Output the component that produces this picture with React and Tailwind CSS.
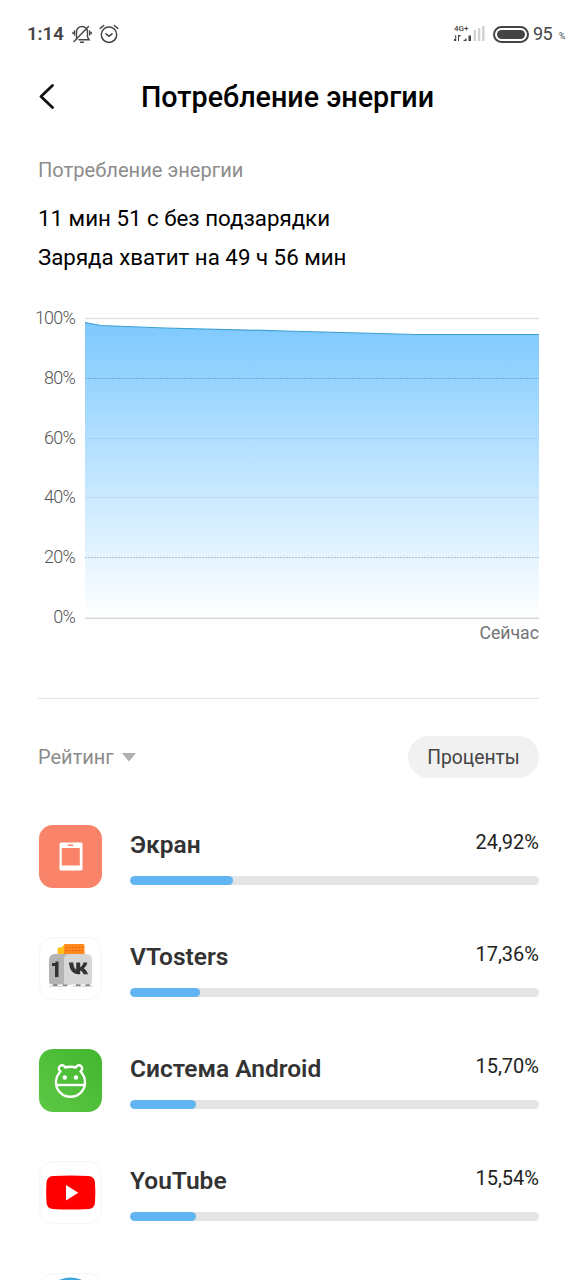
const levels = ["100%", "80%", "60%", "40%", "20%", "0%"];

const apps = [
  { name: "Экран", percent: "24,92%", fill: 25.2, icon: <ScreenIcon /> },
  { name: "VTosters", percent: "17,36%", fill: 17.2, icon: <TosterIcon /> },
  { name: "Система Android", percent: "15,70%", fill: 16.2, icon: <AndroidIcon /> },
  { name: "YouTube", percent: "15,54%", fill: 16.2, icon: <YoutubeIcon /> },
];

function ScreenIcon() {
  return (
    <svg viewBox="0 0 63 63" className="w-full h-full">
      <rect width="63" height="63" rx="14" fill="#fa8469" />
      <rect x="20.5" y="17.5" width="23" height="28" rx="1.5" fill="#fff" />
      <rect x="22.8" y="23" width="18" height="17.5" fill="#fa8469" />
      <rect x="28.5" y="19.5" width="6" height="1.6" rx="0.8" fill="#fa8469" />
    </svg>
  );
}

function TosterIcon() {
  return (
    <svg viewBox="0 0 63 63" className="w-full h-full">
      <rect x="0.5" y="0.5" width="62" height="62" rx="14" fill="#fff" stroke="#f5f5f5" />
      <path d="M25 18V8q0-1 1.500-1H44q1.500 0 1.500 1.500V18z" fill="#ff8a1c" />
      <path d="M18.500 17v-5q0-1.500 1.500-1.500h2L25 8v9z" fill="#ffc01c" />
      <path d="M27 10.500h17M27 13.500h17" stroke="#f4601e" strokeWidth="1.2" strokeDasharray="2 1" />
      <path d="M14 47h4.500v2H14zM24 47h4.500v2H24zM37 47h4.500v2H37zM46.500 47H51v2h-4.500z" fill="#777" />
      <path d="M10 49.300h18M34 49.300h20" stroke="#ccc" strokeWidth="1" />
      <path d="M16 17h16v30.500H13q-3 0-3-3V23q0-6 6-6z" fill="#b4b4b4" />
      <path d="M31 17h16q6 0 6 6v21.500q0 3-3 3H25V23q0-6 6-6z" fill="#d6d6d6" />
      <path d="M13 26h3.500v-1.500h3V40H16V29h-3z" fill="#333" />
      <path d="M30 25.500h4.300c.3 4.500 1.500 6.500 2.900 7v-7h4v4.700c1.300-.5 2.700-2.400 3.200-4.700h4c-.5 2.500-2 4.600-3.700 5.800 1.800 1 3.400 3.200 4.300 6h-4.400c-.6-1.800-1.800-3.400-3.400-3.900v3.900h-1.600c-5.600 0-9-4-9.600-11.800z" fill="#333" />
    </svg>
  );
}

function AndroidIcon() {
  return (
    <svg viewBox="0 0 63 63" className="w-full h-full">
      <defs>
        <linearGradient id="green" x1="0" y1="1" x2="1" y2="0">
          <stop offset="0" stopColor="#5dc947" />
          <stop offset="1" stopColor="#43b52d" />
        </linearGradient>
      </defs>
      <rect width="63" height="63" rx="14" fill="url(#green)" />
      <g fill="none" stroke="#fff" strokeWidth="2.400" strokeLinecap="round" strokeLinejoin="round">
        <path d="M21.500 22.500a3.300 3.300 0 1 1 4.700-4q5.300-1.500 10.600 0a3.300 3.300 0 1 1 4.700 4Q46 27 46 33.500a14.500 14.300 0 0 1-29 0Q17 27 21.500 22.500z" />
        <path d="M17.300 36h28.400" strokeLinecap="butt" />
      </g>
      <circle cx="25.800" cy="28.500" r="2.200" fill="#fff" />
      <circle cx="37" cy="28.500" r="2.200" fill="#fff" />
    </svg>
  );
}

function YoutubeIcon() {
  return (
    <svg viewBox="0 0 63 63" className="w-full h-full">
      <rect x="0.5" y="0.5" width="62" height="62" rx="14" fill="#fff" stroke="#f5f5f5" />
      <path d="M14 15Q31.700 14 49.500 15 55.500 15.500 56 21.500q.7 10 0 20.500-.5 5.500-6.500 6-17.800 1-35.500 0-6-.5-6.500-6-.7-10.500 0-20.500.5-6 6.500-6.500z" fill="#f00" />
      <path d="M27 24v15.500l12.300-7.800z" fill="#fff" />
    </svg>
  );
}

function TelegramIcon() {
  return (
    <svg viewBox="0 0 63 63" className="w-full h-full">
      <rect x="0.5" y="0.5" width="62" height="62" rx="14" fill="#fff" stroke="#f5f5f5" />
      <circle cx="31.500" cy="31.500" r="27" fill="#3fa6dc" />
    </svg>
  );
}

function StatusBar() {
  return (
    <div className="h-[68px] pl-[27px] pr-[10px] flex items-center text-[#444]">
      <span className="w-[45px] pt-px text-[18.5px] leading-none font-semibold">1:14</span>
      <svg width="20" height="20" viewBox="0 0 20 20" fill="none" stroke="currentColor" strokeWidth="1.400" strokeLinecap="round">
        <path d="M4.500 15.500V8a5.500 5.500 0 0 1 11 0v5l1.700 2.700H7M8.500 18.300h3M2.500 7v4M17.700 7v4M1 8.500v1M19.300 8.500v1M2 17.500 16.500 2.500" />
      </svg>
      <svg className="ml-[7px]" width="20" height="20" viewBox="0 0 20 20" fill="none" stroke="currentColor" strokeWidth="1.500" strokeLinecap="round">
        <circle cx="10" cy="10.700" r="7.700" />
        <path d="m7 9.800 3 2.500 3-2.500M1.200 4.300 4.700 1.500M18.800 4.300l-3.500-2.800" />
      </svg>
      <div className="ml-auto w-[17px] -mt-[2px] flex flex-col">
        <span className="text-[8px] leading-[9px] font-medium">4G+</span>
        <svg className="shrink-0" width="18" height="9" viewBox="0 0 18 9" fill="#444">
          <path d="M1.200 2h1v6h-1zM0 6h1.200v2H0zM4 2h1v6H4zM5 2h1.500v1.500H5zM9 8l3.500-3v3zM14.500 2.500H17V8h-2.500z" />
        </svg>
      </div>
      <svg className="mr-[8px]" width="14" height="18" viewBox="0 0 14 18" fill="#d2d2d2">
        <path d="M2.500 5H5v11H2.500zM6.800 3h2.500v13H6.800zM11 1h2.500v15H11z" />
      </svg>
      <div className="w-[36px] h-[17px] rounded-full border-2 border-[#444] p-[2px]">
        <div className="h-full rounded-full bg-[#444]" />
      </div>
      <span className="ml-[4px] w-[26px] text-[18px] leading-none tracking-[-0.5px]">95</span>
      <span className="w-[7px] text-[8.5px] leading-none pt-1">%</span>
    </div>
  );
}

function Chart() {
  return (
    <div className="mt-[22px] flex">
      <div className="w-[37px] mr-[10px] flex flex-col items-end text-[18px] font-light tracking-[-0.8px] text-[#555]">
        {levels.map((level) => (
          <span key={level} className="h-[59.8px] leading-[37px]">{level}</span>
        ))}
      </div>
      <div className="flex-1 h-[345px] pt-[10px]">
        <svg className="block" width="454" height="310" viewBox="0 0 454 310">
          <defs>
            <linearGradient id="charge" x1="0" y1="0" x2="0" y2="1">
              <stop offset="0" stopColor="#7ec9ff" />
              <stop offset="1" stopColor="#ffffff" />
            </linearGradient>
          </defs>
          <path d="M0 9.500h454" stroke="#e3e3e3" strokeWidth="1.500" />
          <path d="M0 13.500 16 16.500 80 19 200 22 332 25.500H454V309H0z" fill="url(#charge)" />
          <path d="M0 13.500 16 16.500 80 19 200 22 332 25.500H454" fill="none" stroke="#3d9fd0" strokeWidth="1.200" />
          <g strokeDasharray="2 1">
            <path d="M0 69.500h454" stroke="#69a9d6" />
            <path d="M0 129.500h454" stroke="#9acbee" />
            <path d="M0 188.500h454" stroke="#b5d3e6" />
            <path d="M0 248.500h454" stroke="#adbcc6" />
          </g>
          <path d="M0 309.200h454" stroke="#d8d8d8" strokeWidth="1.400" />
        </svg>
        <p className="pt-px text-right text-[17.7px] leading-[26px] text-[#737373]">Сейчас</p>
      </div>
    </div>
  );
}

function AppRow({ app }) {
  return (
    <div className="h-[112px] flex">
      <div className="ml-px w-[63px] h-[63px] shrink-0">{app.icon}</div>
      <div className="ml-[28px] flex-1">
        <div className="h-[51px] flex justify-between">
          <span className="text-[24.5px] leading-[40px] font-semibold text-[#333]">{app.name}</span>
          <span className="text-[20px] leading-[34px] text-[#222]">{app.percent}</span>
        </div>
        <div className="h-[9px] rounded-full bg-[#e4e4e4] overflow-hidden">
          <div className="h-full rounded-full bg-[#60b5f2]" style={{ width: `${app.fill}%` }} />
        </div>
      </div>
    </div>
  );
}

function App() {
  return (
    <div className="w-[576px] h-[1280px] overflow-hidden bg-white font-['Roboto',sans-serif] text-black">
      <StatusBar />
      <header className="h-[58px] pl-[38px] flex items-center">
        <svg width="18" height="26" viewBox="0 0 18 26" fill="none" stroke="#111" strokeWidth="2.800" strokeLinecap="round" strokeLinejoin="round">
          <path d="M14.500 1.500 3 12.500l11.500 11" />
        </svg>
        <h1 className="ml-[85px] pt-px text-[28.700px] leading-none font-medium whitespace-nowrap">Потребление энергии</h1>
      </header>

      <main className="pl-[38px] pr-[37px] pt-[24px]">
        <p className="text-[20.1px] leading-[40px] text-[#8c8c8c]">Потребление энергии</p>
        <p className="mt-[9px] text-[22.3px] leading-[39px]">11 мин 51 с без подзарядки</p>
        <p className="text-[22.3px] leading-[39px]">Заряда хватит на 49 ч 56 мин</p>

        <Chart />

        <hr className="mt-[40px] border-[#e2e2e2]" />
        <div className="mt-[37px] h-[42px] flex items-center justify-between">
          <button className="flex items-center gap-2 pt-px text-[20px] text-[#8c8c8c]">
            Рейтинг
            <svg width="14" height="9" viewBox="0 0 14 9" fill="#b0b0b0">
              <path d="M0 0h14L7 8.500z" />
            </svg>
          </button>
          <button className="w-[131px] h-[42px] pt-[3px] rounded-full bg-[#f1f1f1] text-[19.3px] text-[#444]">Проценты</button>
        </div>

        <div className="mt-[47px]">
          {apps.map((app) => (
            <AppRow key={app.name} app={app} />
          ))}
          <div className="ml-px w-[63px] h-[63px]"><TelegramIcon /></div>
        </div>
      </main>
    </div>
  );
}

export default App;
